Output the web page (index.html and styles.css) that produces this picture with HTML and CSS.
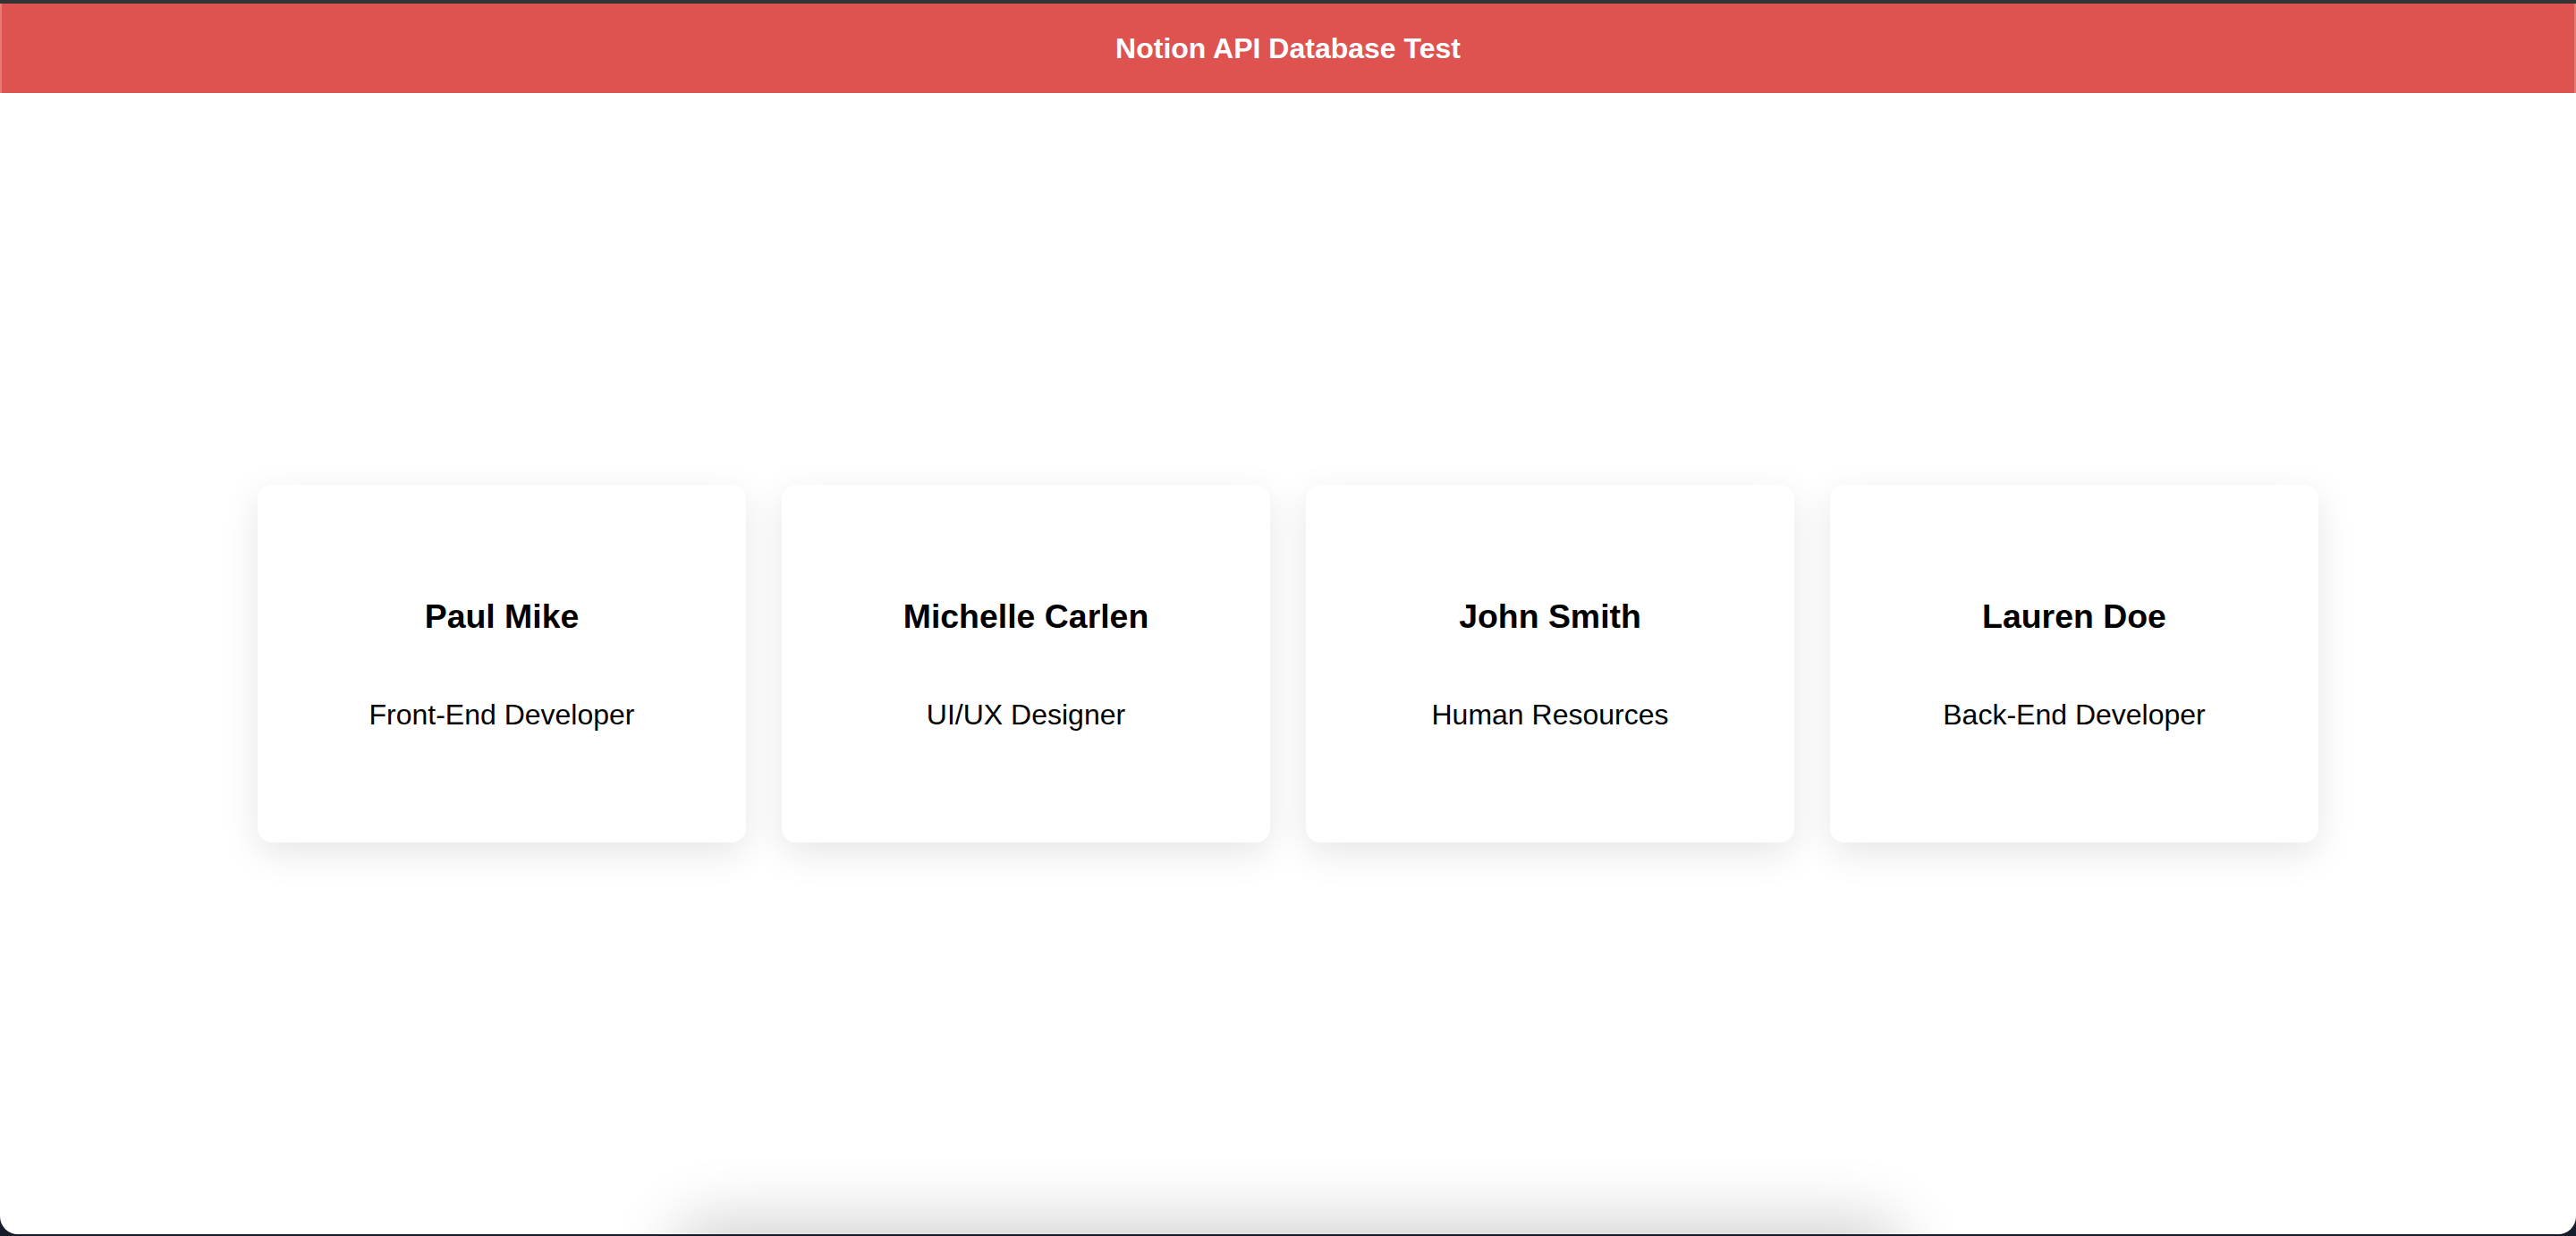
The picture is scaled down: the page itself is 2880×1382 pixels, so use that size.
FILE: index.html
```html
<!DOCTYPE html>
<html lang="en">
<head>
<meta charset="utf-8">
<title>Notion API Database Test</title>
<link rel="stylesheet" href="styles.css">
</head>
<body>
<div class="window">
  <div class="titlebar-edge"></div>
  <header class="header">
    <h1 class="header-title">Notion API Database Test</h1>
  </header>
  <main class="main">
    <div class="cards">
      <div class="card">
        <h3 class="card-name">Paul Mike</h3>
        <p class="card-role">Front-End Developer</p>
      </div>
      <div class="card">
        <h3 class="card-name">Michelle Carlen</h3>
        <p class="card-role">UI/UX Designer</p>
      </div>
      <div class="card">
        <h3 class="card-name">John Smith</h3>
        <p class="card-role">Human Resources</p>
      </div>
      <div class="card">
        <h3 class="card-name">Lauren Doe</h3>
        <p class="card-role">Back-End Developer</p>
      </div>
    </div>
  </main>
  <div class="dock-shadow"></div>
</div>
</body>
</html>
```
FILE: styles.css
```css
html, body {
  margin: 0;
  padding: 0;
}
body {
  background: #151c2a;
  width: 2880px;
  height: 1382px;
  overflow: hidden;
  font-family: "Liberation Sans", Arial, sans-serif;
  color: #000;
}
.window {
  position: relative;
  height: 1380px;
  background: #fff;
  border-radius: 0 0 20px 20px;
  overflow: hidden;
  display: flex;
  flex-direction: column;
}
.titlebar-edge {
  height: 4px;
  background: #333335;
  flex: none;
}
.header {
  flex: none;
  height: 100px;
  background: #de534f;
  border-left: 2px solid #e67a76;
  border-right: 2px solid #e67a76;
  display: flex;
  align-items: center;
  justify-content: center;
}
.header-title {
  margin: 0;
  font-size: 32px;
  font-weight: 700;
  color: #fff;
  line-height: 36.8px;
}
.main {
  flex: 1;
  display: flex;
  align-items: center;
  justify-content: center;
}
.cards {
  width: 2304px;
  display: flex;
  gap: 40px;
}
.card {
  flex: 1;
  height: 400px;
  box-sizing: border-box;
  background: #fff;
  border-radius: 16px;
  box-shadow: 0 12px 40px rgba(0, 0, 0, 0.1);
  display: flex;
  flex-direction: column;
  align-items: center;
  padding-top: 126px;
  text-align: center;
}
.card-name {
  margin: 0;
  font-size: 37.44px;
  font-weight: 700;
  line-height: 43px;
}
.card-role {
  margin: 70px 0 0;
  font-size: 32px;
  line-height: 36.8px;
}
.dock-shadow {
  position: absolute;
  left: 760px;
  width: 1360px;
  bottom: -70px;
  height: 70px;
  border-radius: 40px;
  box-shadow: 0 -6px 70px 10px rgba(0, 0, 0, 0.18);
}
```
